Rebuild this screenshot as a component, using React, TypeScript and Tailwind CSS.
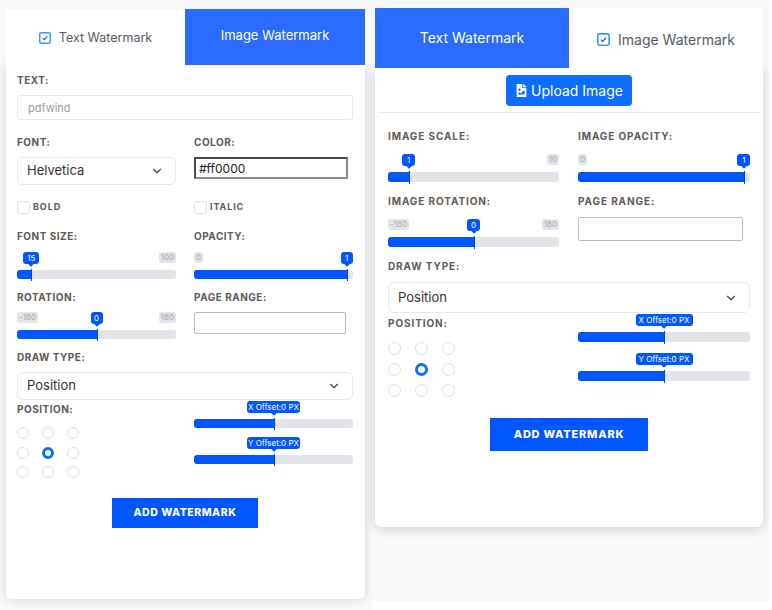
import { ChevronDown } from 'lucide-react';
import { FaFileImage } from 'react-icons/fa';

const font = { fontFamily: 'Inter, "Liberation Sans", sans-serif' };

function CheckIcon({ size }: { size: number }) {
  return (
    <svg width={size} height={size} viewBox="0 0 12 12" fill="none" className="shrink-0">
      <rect x="0.75" y="0.75" width="10.5" height="10.5" rx="1.5" fill="#fff" stroke="#2f9bf5" strokeWidth="1.5" />
      <path d="M3.6 6.1 5.3 7.7 8.4 4.4" stroke="#1b5fc9" strokeWidth="1.2" />
    </svg>
  );
}

function Label({ text, className = 'text-[10px] tracking-[0.05em]' }: { text: string; className?: string }) {
  return <div className={`h-[14px] leading-[14px] font-bold text-[#5f5855] ${className}`}>{text}</div>;
}

interface SliderProps {
  value: number;
  tip: string;
  tipWidth: number;
  min?: string;
  max?: string;
  h: number;
  pad: string;
}

function Slider({ value, tip, tipWidth, min, max, h, pad }: SliderProps) {
  return (
    <div className={pad}>
      <div className="relative bg-[#e1e4e8] rounded-[3px]" style={{ height: h }}>
        <div className="h-full bg-[#0056ff] rounded-l-[3px]" style={{ width: `${value}%` }}></div>
        <div className="absolute top-[-1px] bottom-[-2px] w-[1px] bg-[#0047d6]" style={{ left: `${value}%` }}></div>
        <div
          className="absolute top-[-18px] h-[12px] bg-[#0056ff] text-white rounded-[3px] text-[8px] leading-[12px] text-center whitespace-nowrap"
          style={{ left: `${value}%`, width: tipWidth, marginLeft: -tipWidth / 2 }}
        >
          {tip}
          <div className="absolute left-1/2 ml-[-2px] bottom-[-2px] w-[4px] h-[4px] bg-[#0056ff] rotate-45"></div>
        </div>
        {min && (
          <div className="absolute left-0 top-[-18px] h-[11px] px-[2px] bg-[#e1e4e8] text-[#a3a7ad] rounded-[3px] text-[8px] leading-[11px]">
            {min}
          </div>
        )}
        {max && (
          <div className="absolute right-0 top-[-18px] h-[11px] px-[2px] bg-[#e1e4e8] text-[#a3a7ad] rounded-[3px] text-[8px] leading-[11px]">
            {max}
          </div>
        )}
      </div>
    </div>
  );
}

function Select({ text, className }: { text: string; className: string }) {
  return (
    <div className={`flex items-center justify-between pl-[9px] pr-[11px] bg-white border border-[#e6e8eb] rounded-[6px] text-[13px] text-[#333] ${className}`}>
      <span>{text}</span>
      <ChevronDown size={14} color="#444" />
    </div>
  );
}

function Radios({ size, rowClass, gapClass }: { size: string; rowClass: string; gapClass: string }) {
  const cells = [0, 1, 2, 3, 4, 5, 6, 7, 8];
  return (
    <div className={`grid grid-cols-3 w-fit ${rowClass} ${gapClass}`}>
      {cells.map((c) => (
        <div
          key={c}
          className={`${size} rounded-full ${c === 4 ? 'border-[3px] border-[#0d6efd]' : 'border border-[#dcdfe3]'}`}
        ></div>
      ))}
    </div>
  );
}

function TextPanel() {
  return (
    <div className="w-[359px]">
      <div className="flex h-[56px]">
        <div className="w-[179px] bg-white rounded-tl-[4px] flex items-center justify-center gap-[8px] text-[12.5px] text-[#555b63] pt-[2px]">
          <CheckIcon size={12} />
          Text Watermark
        </div>
        <div className="flex-1 bg-[#2b6cff] flex items-center justify-center text-[13px] text-white pb-[2px]">
          Image Watermark
        </div>
      </div>
      <div className="h-[534px] bg-white rounded-b-[6px] shadow-[0_0_12px_rgba(0,0,0,0.14)] pl-[11px] pr-[12px] flex flex-col">
        <Label text="TEXT:" className="mt-[8px] text-[10px] tracking-[0.05em]" />
        <input
          readOnly
          value="pdfwind"
          className="mt-[8px] h-[25px] w-full border border-[#e6e8eb] rounded-[3px] px-[10px] text-[11px] text-[#98a0a8] outline-none"
        />

        <div className="grid grid-cols-2 gap-x-[18px] mt-[15px]">
          <div>
            <Label text="FONT:" />
            <Select text="Helvetica" className="mt-[8px] h-[28px]" />
          </div>
          <div>
            <Label text="COLOR:" />
            <input
              readOnly
              value="#ff0000"
              className="mt-[8px] h-[22px] w-[154px] border-2 border-t-[#4a4a4a] border-l-[#4a4a4a] border-r-[#8a8a8a] border-b-[#8a8a8a] px-[3px] text-[12px] text-[#222] outline-none"
            />
          </div>
        </div>

        <div className="grid grid-cols-2 gap-x-[18px] mt-[15px] h-[13px]">
          <div className="flex items-center gap-[3px]">
            <div className="w-[13px] h-[13px] border border-[#dcdfe3] rounded-[3px]"></div>
            <Label text="BOLD" className="text-[9px] tracking-[0.1em]" />
          </div>
          <div className="flex items-center gap-[3px]">
            <div className="w-[13px] h-[13px] border border-[#dcdfe3] rounded-[3px]"></div>
            <Label text="ITALIC" className="text-[9px] tracking-[0.1em]" />
          </div>
        </div>

        <div className="grid grid-cols-2 gap-x-[18px] mt-[16px]">
          <div>
            <Label text="FONT SIZE:" />
            <Slider value={9} tip="15" tipWidth={16} max="100" h={9} pad="pt-[27px]" />
          </div>
          <div>
            <Label text="OPACITY:" />
            <Slider value={96} tip="1" tipWidth={12} min="0" h={9} pad="pt-[27px]" />
          </div>
        </div>

        <div className="grid grid-cols-2 gap-x-[18px] mt-[11px]">
          <div>
            <Label text="ROTATION:" />
            <Slider value={50} tip="0" tipWidth={12} min="-180" max="180" h={9} pad="pt-[26px]" />
          </div>
          <div>
            <Label text="PAGE RANGE:" />
            <div className="mt-[8px] h-[22px] w-[152px] border border-[#b9b9b9] rounded-[2px]"></div>
          </div>
        </div>

        <Label text="DRAW TYPE:" className="mt-[11px] text-[10px] tracking-[0.05em]" />
        <Select text="Position" className="mt-[8px] h-[28px]" />

        <div className="grid grid-cols-2 gap-x-[18px] mt-[2px]">
          <div>
            <Label text="POSITION:" />
            <Radios size="w-[12px] h-[12px]" rowClass="mt-[11px]" gapClass="gap-x-[13px] gap-y-[7.5px]" />
          </div>
          <div>
            <Slider value={50} tip="X Offset:0 PX" tipWidth={53} h={9} pad="pt-[17px]" />
            <Slider value={50} tip="Y Offset:0 PX" tipWidth={53} h={9} pad="pt-[27px]" />
          </div>
        </div>

        <button className="self-center mt-[20px] w-[146px] h-[30px] bg-[#0056ff] text-white text-[10.5px] font-extrabold tracking-[0.05em]">
          ADD WATERMARK
        </button>
      </div>
    </div>
  );
}

function ImagePanel() {
  const label = 'text-[10px] tracking-[0.09em]';
  return (
    <div className="w-[388px] ml-[3px]">
      <div className="flex h-[60px]">
        <div className="w-[194px] bg-[#2b6cff] flex items-center justify-center text-[14px] text-white pb-[2px]">
          Text Watermark
        </div>
        <div className="flex-1 bg-white flex items-center justify-center gap-[8px] text-[14px] text-[#555b63] pt-[2px]">
          <CheckIcon size={13} />
          Image Watermark
        </div>
      </div>
      <div className="h-[459px] bg-white rounded-b-[6px] shadow-[0_2px_12px_rgba(0,0,0,0.16)] px-[13px] flex flex-col">
        <button className="self-center mt-[7px] w-[126px] h-[31px] bg-[#0d6efd] text-white rounded-[4px] text-[14px] flex items-center justify-center gap-[3px]">
          <FaFileImage size={13} />
          Upload Image
        </button>
        <div className="mt-[6px] mx-[-10px] h-[1px] bg-[#e8eaed]"></div>

        <div className="grid grid-cols-[171px_172px] gap-x-[19px] mt-[16px]">
          <div>
            <Label text="IMAGE SCALE:" className={label} />
            <Slider value={12} tip="1" tipWidth={13} max="10" h={10} pad="pt-[29px]" />
          </div>
          <div>
            <Label text="IMAGE OPACITY:" className={label} />
            <Slider value={96.5} tip="1" tipWidth={13} min="0" h={10} pad="pt-[29px]" />
          </div>
        </div>

        <div className="grid grid-cols-[171px_172px] gap-x-[19px] mt-[12px]">
          <div>
            <Label text="IMAGE ROTATION:" className={label} />
            <Slider value={50} tip="0" tipWidth={13} min="-180" max="180" h={10} pad="pt-[29px]" />
          </div>
          <div>
            <Label text="PAGE RANGE:" className={label} />
            <div className="mt-[9px] h-[24px] w-[165px] border border-[#b9b9b9] rounded-[2px]"></div>
          </div>
        </div>

        <Label text="DRAW TYPE:" className={`mt-[12px] ${label}`} />
        <Select text="Position" className="mt-[9px] h-[31px]" />

        <div className="grid grid-cols-[171px_172px] gap-x-[19px] mt-[3px]">
          <div>
            <Label text="POSITION:" className={label} />
            <Radios size="w-[13px] h-[13px]" rowClass="mt-[12px]" gapClass="gap-x-[14px] gap-y-[8px]" />
          </div>
          <div>
            <Slider value={50} tip="X Offset:0 PX" tipWidth={57} h={10} pad="pt-[16px]" />
            <Slider value={50} tip="Y Offset:0 PX" tipWidth={57} h={10} pad="pt-[29px]" />
          </div>
        </div>

        <button className="self-center mt-[21px] w-[158px] h-[33px] bg-[#0056ff] text-white text-[11px] font-extrabold tracking-[0.07em]">
          ADD WATERMARK
        </button>
      </div>
    </div>
  );
}

export default function App() {
  return (
    <div className="w-[772px] h-[610px] bg-white flex overflow-hidden" style={font}>
      <div className="w-[372px] h-[610px] bg-[#f7f8fa] pl-[6px] pt-[9px]">
        <TextPanel />
      </div>
      <div className="w-[397px] h-[601px] bg-[#f7f8fa] pt-[8px]">
        <ImagePanel />
      </div>
    </div>
  );
}
